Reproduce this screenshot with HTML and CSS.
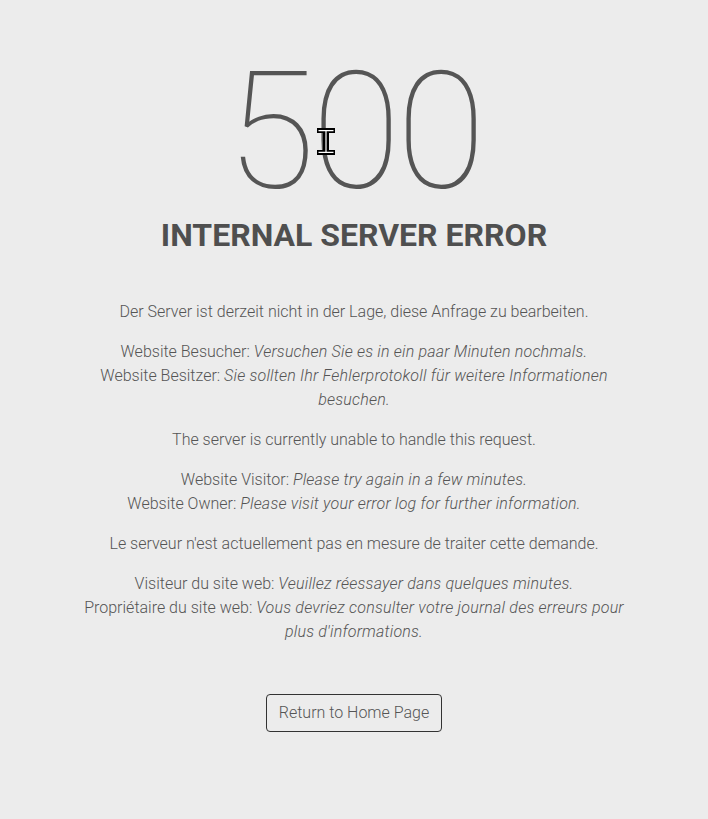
FILE: index.html
```html
<!DOCTYPE html>
<html lang="de">
<head>
<meta charset="utf-8">
<title>500 Internal Server Error</title>
<link rel="stylesheet" href="styles.css">
</head>
<body>
<main class="page">
  <h1 class="code">500</h1>
  <h2 class="title">INTERNAL SERVER ERROR</h2>
  <div class="content">
    <p>Der Server ist derzeit nicht in der Lage, diese Anfrage zu bearbeiten.</p>
    <p>Website Besucher: <em>Versuchen Sie es in ein paar Minuten nochmals.</em><br>Website Besitzer: <em>Sie sollten Ihr Fehlerprotokoll für weitere Informationen besuchen.</em></p>
    <p>The server is currently unable to handle this request.</p>
    <p>Website Visitor: <em>Please try again in a few minutes.</em><br>Website Owner: <em>Please visit your error log for further information.</em></p>
    <p>Le serveur n'est actuellement pas en mesure de traiter cette demande.</p>
    <p>Visiteur du site web: <em>Veuillez réessayer dans quelques minutes.</em><br>Propriétaire du site web: <em>Vous devriez consulter votre journal des erreurs pour plus d'informations.</em></p>
  </div>
  <a class="btn" href="#">Return to Home Page</a>
</main>
<svg class="cursor" width="18" height="28" viewBox="0 0 18 28" aria-hidden="true">
  <path d="M0 0h18v5h-6v17h6v5H0v-5h6V5H0z" fill="#000"/>
  <path d="M1.5 2h15v1.2H9.6v20.6h6.9V25h-15v-1.2h6.9V3.2H1.5z" fill="#fff"/>
</svg>
</body>
</html>
```
FILE: styles.css
```css
html, body {
  margin: 0;
  padding: 0;
  background: #ececec;
}
body {
  font-family: Roboto, "Liberation Sans", sans-serif;
  color: #555;
  position: relative;
  min-height: 819px;
}
.page {
  display: flex;
  flex-direction: column;
  align-items: center;
  padding-top: 67px;
}
.code {
  margin: 0;
  font-weight: 100;
  font-size: 163px;
  line-height: 130px;
  color: #555;
  letter-spacing: -4px;
}
.title {
  margin: 21px 0 0;
  font-weight: 700;
  font-size: 32px;
  line-height: 34px;
  color: #4f4f4f;
}
.content {
  width: 545px;
  margin-top: 48px;
  text-align: center;
  font-weight: 300;
  font-size: 16px;
  line-height: 24px;
}
.content p {
  margin: 0 0 16px;
}
.content em {
  font-style: italic;
  letter-spacing: 0.2px;
}
.btn {
  margin-top: 34px;
  display: inline-block;
  padding: 6px 12px;
  border: 1px solid #333;
  border-radius: 4px;
  color: #555;
  text-decoration: none;
  font-weight: 300;
  font-size: 16px;
  line-height: 24px;
}
.cursor {
  position: absolute;
  left: 317px;
  top: 128px;
}
```
